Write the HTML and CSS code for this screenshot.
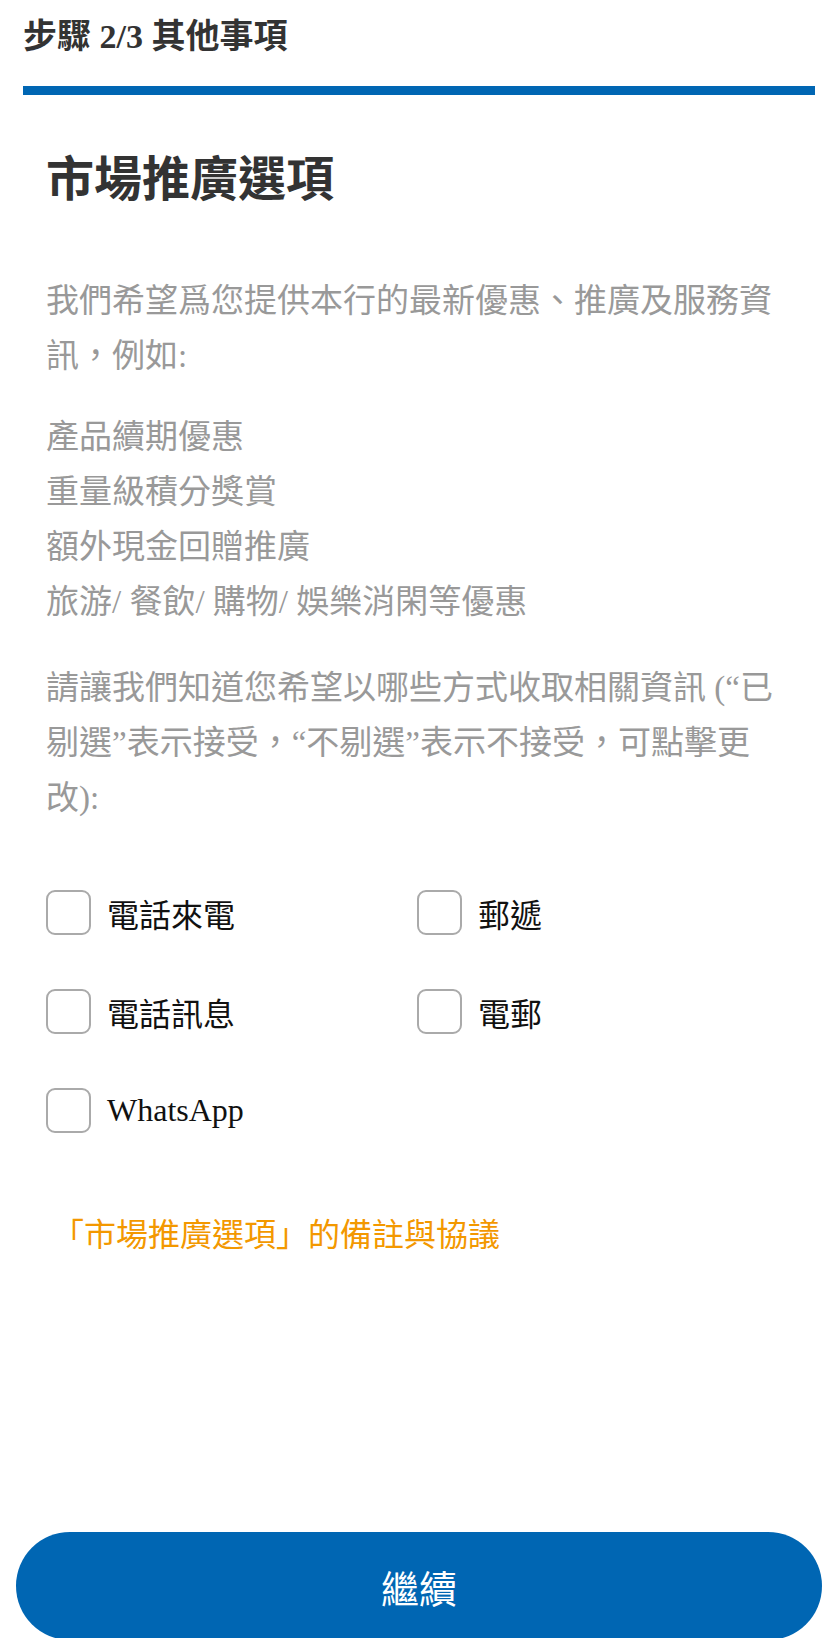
FILE: index.html
```html
<!DOCTYPE html>
<html lang="zh-Hant">
<head>
    <meta charset="UTF-8">
    <meta name="viewport" content="width=device-width, initial-scale=1.0">
    <title>市場推廣選項</title>
    <link rel="stylesheet" href="styles.css">
</head>
<body>
    <div class="topo">
        <div class="passo">步驟 2/3 其他事項</div>
        <div class="barra"></div>
    </div>
    <div class="conteudo">
        <h1>市場推廣選項</h1>
        <p class="texto">我們希望爲您提供本行的最新優惠、推廣及服務資訊，例如:</p>
        <ul class="lista">
            <li>產品續期優惠</li>
            <li>重量級積分獎賞</li>
            <li>額外現金回贈推廣</li>
            <li>旅游/ 餐飲/ 購物/ 娛樂消閑等優惠</li>
        </ul>
        <p class="texto">請讓我們知道您希望以哪些方式收取相關資訊 (“已剔選”表示接受，“不剔選”表示不接受，可點擊更改):</p>
        <div class="opcoes">
            <label class="opcao"><input type="checkbox"><span>電話來電</span></label>
            <label class="opcao"><input type="checkbox"><span>郵遞</span></label>
            <label class="opcao"><input type="checkbox"><span>電話訊息</span></label>
            <label class="opcao"><input type="checkbox"><span>電郵</span></label>
            <label class="opcao"><input type="checkbox"><span>WhatsApp</span></label>
        </div>
        <a class="link" href="#">「市場推廣選項」的備註與協議</a>
    </div>
    <button type="button" class="botao">繼續</button>
</body>
</html>
```

FILE: styles.css
```css
body {
    margin: 0;
    font-family: "Liberation Serif", "Noto Sans CJK TC", serif;
    background-color: #fff;
}

.topo {
    padding: 17px 23px 0;
}

.passo {
    font-size: 34px;
    line-height: 40px;
    font-weight: bold;
    color: #333;
}

.barra {
    margin-top: 29px;
    height: 9px;
    background-color: #0066b3;
}

.conteudo {
    padding: 0 46px;
}

h1 {
    margin: 55px 0 0;
    font-size: 48px;
    line-height: 60px;
    font-weight: bold;
    color: #333;
}

.texto {
    margin: 64px 0 0;
    font-size: 33px;
    line-height: 55px;
    color: #999;
}

.lista {
    list-style: none;
    margin: 26px 0 0;
    padding: 0;
    font-size: 33px;
    line-height: 55px;
    color: #999;
}

.lista + .texto {
    margin-top: 31px;
}

.opcoes {
    display: grid;
    grid-template-columns: 371px 1fr;
    row-gap: 54px;
    margin-top: 64px;
}

.opcao {
    display: flex;
    align-items: center;
    gap: 16px;
    height: 45px;
    font-size: 32px;
    color: #111;
}

.opcao input {
    appearance: none;
    margin: 0;
    width: 45px;
    height: 45px;
    border: 2px solid #aaa;
    border-radius: 9px;
    box-sizing: border-box;
    background-color: #fff;
}

.link {
    display: block;
    margin-top: 80px;
    padding-left: 6px;
    font-size: 32px;
    line-height: 44px;
    color: #f39800;
    text-decoration: none;
}

.botao {
    display: block;
    width: calc(100% - 32px);
    height: 108px;
    margin: 275px 16px 0;
    border: none;
    border-radius: 54px;
    background-color: #0066b3;
    color: #fff;
    font-family: "Noto Sans CJK TC", sans-serif;
    font-size: 38px;
}
```
